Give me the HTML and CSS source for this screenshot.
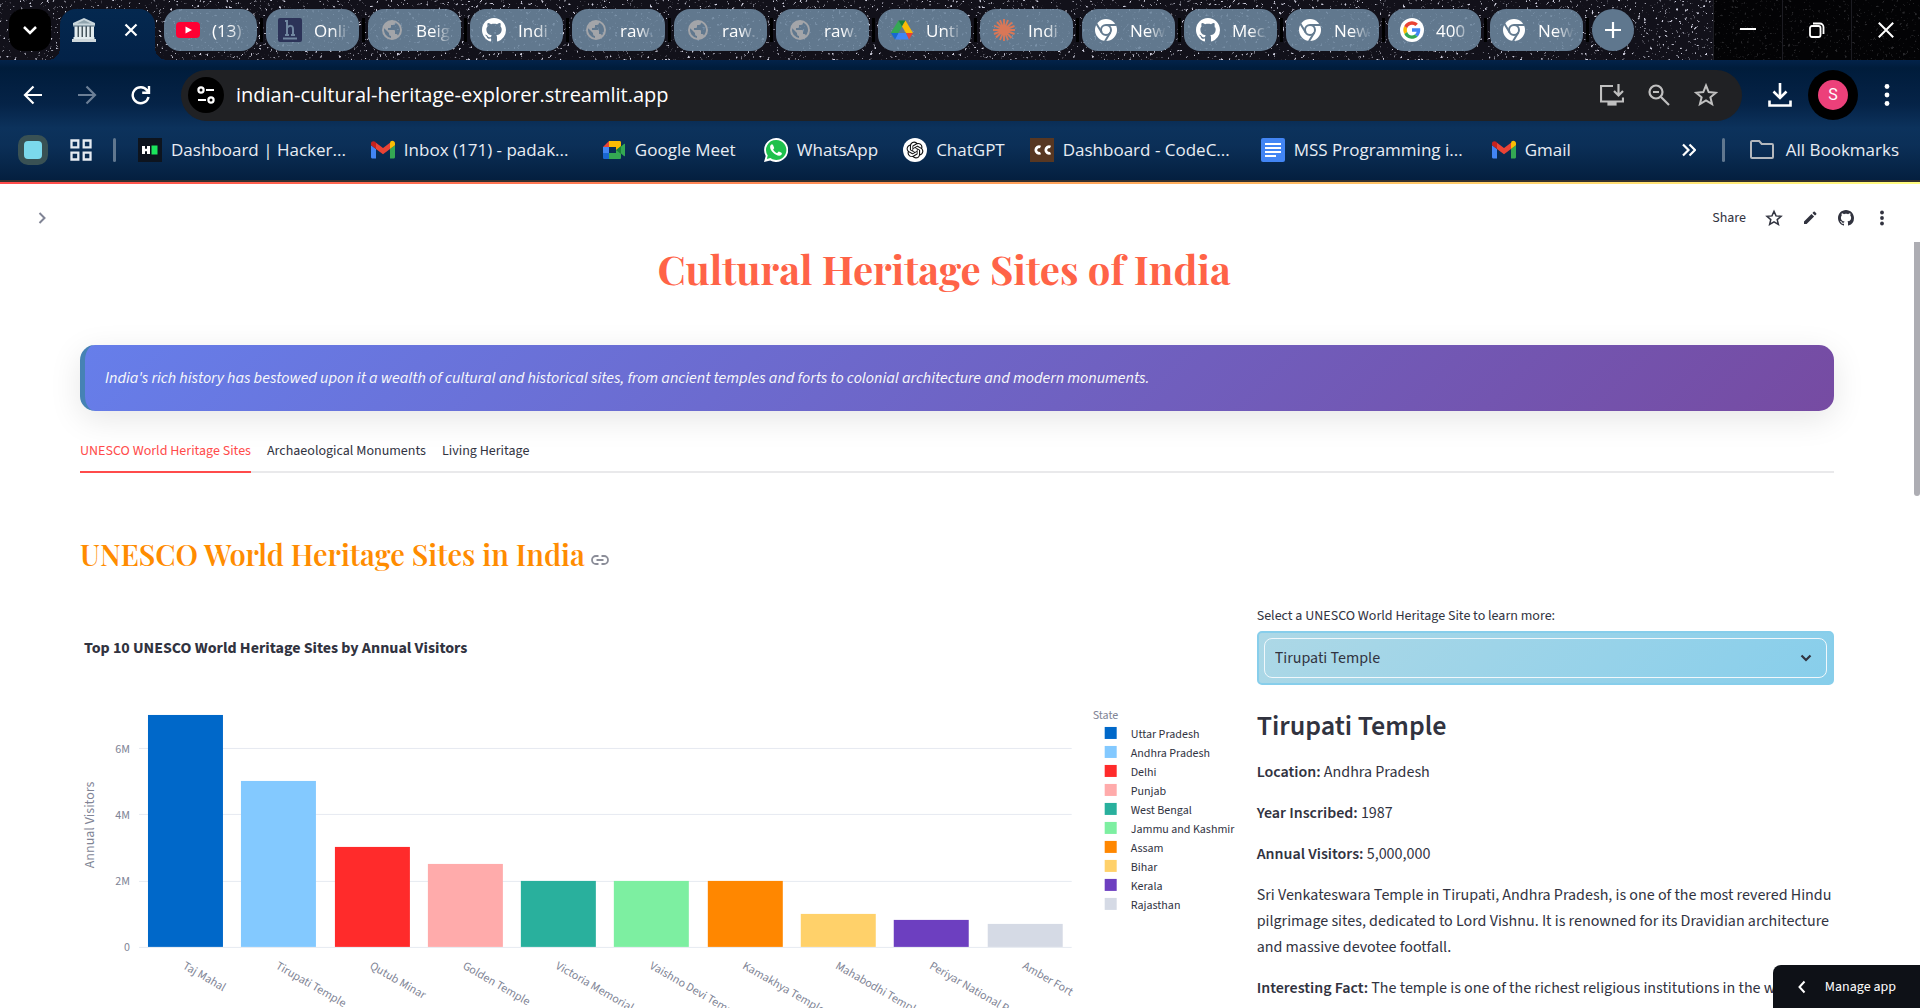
FILE: index.html
```html
<!DOCTYPE html>
<html lang="en">
<head>
<meta charset="utf-8">
<meta name="viewport" content="width=device-width, initial-scale=1">
<title>Cultural Heritage Sites of India</title>
<link rel="stylesheet" href="styles.css">
</head>
<body>
<svg class="sprite" aria-hidden="true">
  <symbol id="globe" viewBox="0 0 24 24"><path fill="#a3a5a9" d="M12 2a10 10 0 1 0 0 20 10 10 0 0 0 0-20zm-1 17.900A8 8 0 0 1 4.200 10.200L9 15v1a2 2 0 0 0 2 2zm6.900-2.500A2 2 0 0 0 16 16h-1v-3a1 1 0 0 0-1-1H8v-2h2a1 1 0 0 0 1-1V7h2a2 2 0 0 0 2-2v-.400a8 8 0 0 1 2.900 12.800z"/></symbol>
  <symbol id="github" viewBox="0 0 16 16"><path fill="currentColor" d="M8 0C3.580 0 0 3.580 0 8c0 3.540 2.290 6.530 5.470 7.590.4.070.55-.17.55-.38 0-.19-.01-.82-.01-1.490-2.010.37-2.530-.49-2.690-.94-.09-.23-.48-.94-.82-1.130-.28-.15-.68-.52-.01-.53.63-.01 1.080.58 1.230.82.72 1.210 1.870.87 2.330.66.07-.52.28-.87.51-1.070-1.780-.2-3.640-.89-3.640-3.950 0-.87.31-1.590.82-2.150-.08-.2-.36-1.020.08-2.120 0 0 .67-.21 2.200.82.64-.18 1.320-.27 2-.27s1.360.09 2 .27c1.530-1.040 2.200-.82 2.200-.82.44 1.100.16 1.920.08 2.120.51.56.82 1.270.82 2.150 0 3.070-1.870 3.750-3.650 3.950.29.25.54.73.54 1.480 0 1.070-.01 1.930-.01 2.200 0 .21.15.46.55.38A8.010 8.010 0 0 0 16 8c0-4.420-3.580-8-8-8z"/></symbol>
  <symbol id="chrome" viewBox="0 0 24 24"><circle cx="12" cy="12" r="11" fill="#fff"/><g fill="none" stroke="#647b90" stroke-width="2"><circle cx="12" cy="12" r="5"/><path d="M12 7h10.500M7.700 14.500 2.400 5.800M16.300 14.500 11 23.300"/></g></symbol>
  <symbol id="gmail" viewBox="0 0 24 24"><path fill="#4285f4" d="M1 20.500h4V11L0 7.200v11.600c0 1 .5 1.700 1 1.700z"/><path fill="#34a853" d="M19 20.500h4c.6 0 1-.7 1-1.700V7.200L19 11z"/><path fill="#fbbc04" d="M19 4.800V11l5-3.800V5.500c0-2.300-2.500-3.500-4.300-2.200z"/><path fill="#ea4335" d="M5 11V4.700l7 5.300 7-5.300V11l-7 5.300z"/><path fill="#c5221f" d="M0 5.500v1.700L5 11V4.700l-.7-.9C2.500 2.500 0 3.200 0 5.500z"/></symbol>
</svg>

<header class="browser">
  <div class="tabstrip">
    <svg class="stars" aria-hidden="true"><filter id="sky" x="0" y="0" width="100%" height="100%"><feTurbulence type="fractalNoise" baseFrequency=".34" numOctaves="2" seed="7"/><feColorMatrix values="0 0 0 0 .62  0 0 0 0 .62  0 0 0 0 .72  8 0 0 0 -5.200"/></filter><rect width="100%" height="100%" filter="url(#sky)"/></svg>
    <button class="tabsearch" aria-label="Search tabs"><svg width="16" height="16" viewBox="0 0 16 16" fill="none" stroke="#fff" stroke-width="2.500"><path d="m2 5 6 6 6-6"/></svg></button>
    <div class="tab active">
      <svg width="24" height="24" viewBox="0 0 24 24"><path fill="#c9d6dc" d="M12 0 23 5v3H1V5z"/><path fill="#90a4ae" d="m12 2 7 3.500H5zM1 7h22v1.500H1z"/><path fill="#46555c" d="M3 8.500h18V19H3z"/><path fill="#e3ecef" d="M2.500 8.500h3V19h-3zm4.500 0h2.500V19H7zm4 0h2.500V19H11zm4 0h2.500V19H15zm4 0h3V19h-3zM1.500 19h21v2h-21z"/><path fill="#cfd8dc" d="M0 21h24v3H0z"/></svg>
      <button class="tabclose" aria-label="Close tab"><svg width="14" height="14" viewBox="0 0 14 14" stroke="#fff" stroke-width="2.200"><path d="m1.500 1.500 11 11m0-11-11 11"/></svg></button>
    </div>
    <div class="tab"><svg viewBox="0 0 24 24"><rect y="4" width="24" height="16" rx="4" fill="#f03"/><path fill="#fff" d="M9.500 8.500 16 12l-6.500 3.500z"/></svg><span>(13)</span></div><i></i>
    <div class="tab"><svg viewBox="0 0 24 24"><rect width="24" height="24" rx="2" fill="#2c3358"/><path fill="none" stroke="#7187a0" stroke-width="2" d="M7 3h2v14M7 17h4m-2-7c2-3 6-3 6 1v6m-2 0h4M5 20.500h14"/></svg><span>Onli</span></div><i></i>
    <div class="tab"><svg><use href="#globe"/></svg><span>Beig</span></div><i></i>
    <div class="tab"><svg><use href="#github"/></svg><span>Indi</span></div><i></i>
    <div class="tab"><svg><use href="#globe"/></svg><span>raw.</span></div><i></i>
    <div class="tab"><svg><use href="#globe"/></svg><span>raw.</span></div><i></i>
    <div class="tab"><svg><use href="#globe"/></svg><span>raw.</span></div><i></i>
    <div class="tab"><svg viewBox="0 0 24 24"><path fill="#34a853" d="M8.500 2.500 12 8.500 5 21 1 14.500z"/><path fill="#188038" d="M8.500 2.500h7L12 8.500z"/><path fill="#fbbc04" d="M15.500 2.500 23 15h-7L12 8.500z"/><path fill="#4285f4" d="M8 15h8l3 6.500H5z"/><path fill="#1967d2" d="M1 15h7.500L5 21.500z"/><path fill="#ea4335" d="M16 15h7l-4 6.500z"/></svg><span>Unti</span></div><i></i>
    <div class="tab"><svg viewBox="0 0 24 24" stroke="#d97757" stroke-width="1.900"><path d="M12 12V1m0 11 4-10m-4 10 8-7.500M12 12l10.500-4M12 12h11M12 12l10.500 4M12 12l7.500 8M12 12l4 10m-4-10v11m0-11-4 10m4-10-8 7.500M12 12 2 16m10-4H1m11 0L2 7.500M12 12 5 4m7 8L8 2"/></svg><span>Indi</span></div><i></i>
    <div class="tab"><svg><use href="#chrome"/></svg><span>New</span></div><i></i>
    <div class="tab"><svg><use href="#github"/></svg><span>Mec</span></div><i></i>
    <div class="tab"><svg><use href="#chrome"/></svg><span>New</span></div><i></i>
    <div class="tab"><svg viewBox="0 0 24 24"><circle cx="12" cy="12" r="12" fill="#fff"/><path fill="#4285f4" d="M20.200 10.300H12v3.500h4.700c-.3 1.200-1 2.100-1.900 2.700l2.800 2.200c2-1.900 3-4.900 2.600-8.400z"/><path fill="#34a853" d="M4.300 15.900A8.600 8.600 0 0 0 17.600 18.700l-2.800-2.200c-3 2-6.800.6-7.700-2.800z"/><path fill="#fbbc05" d="M4.300 8.100a8.500 8.500 0 0 0 0 7.800l2.800-2.200a5.400 5.400 0 0 1 0-3.400z"/><path fill="#ea4335" d="M4.300 8.100A8.600 8.600 0 0 1 17.900 5.700l-2.500 2.400C12.500 5.600 8.300 6.900 7.100 10.300z"/></svg><span>400</span></div><i></i>
    <div class="tab"><svg><use href="#chrome"/></svg><span>New</span></div><i></i>
    <button class="newtab" aria-label="New tab"><svg width="16" height="16" viewBox="0 0 16 16" stroke="#fff" stroke-width="2.200"><path d="M8 0v16M0 8h16"/></svg></button>
    <div class="winctl">
      <button aria-label="Minimize"><svg width="16" height="16" viewBox="0 0 16 16" stroke="#fff" stroke-width="2"><path d="M0 7h16"/></svg></button>
      <button aria-label="Restore"><svg width="16" height="16" viewBox="0 0 16 16" fill="none" stroke="#fff" stroke-width="1.800"><rect x="1" y="4" width="10.500" height="11" rx="2"/><path d="M4 1.500h7a3.500 3.500 0 0 1 3.500 3.500v7"/></svg></button>
      <button aria-label="Close"><svg width="16" height="16" viewBox="0 0 16 16" stroke="#fff" stroke-width="2"><path d="m.8.8 14.400 14.400m0-14.400L.8 15.200"/></svg></button>
    </div>
  </div>

  <div class="toolbar">
    <button aria-label="Back"><svg width="20" height="20" viewBox="0 0 20 20" fill="none" stroke="#fff" stroke-width="2.200"><path d="M19 10H2m8.500-8.500L2 10l8.500 8.500"/></svg></button>
    <button aria-label="Forward"><svg width="20" height="20" viewBox="0 0 20 20" fill="none" stroke="#6c7f96" stroke-width="2.200"><path d="M1 10h17M9.500 1.500 18 10l-8.500 8.500"/></svg></button>
    <button aria-label="Reload"><svg width="20" height="20" viewBox="0 0 20 20" fill="none" stroke="#fff" stroke-width="2.400"><path d="M17.500 12a8 8 0 1 1-1.300-6.500L18 7.500M18 1v6.800h-6.800"/></svg></button>
    <div class="omnibox">
      <button class="siteinfo" aria-label="View site information"><svg width="20" height="20" viewBox="0 0 20 20" fill="none" stroke="#fff" stroke-width="2.200"><circle cx="5" cy="5" r="2.600"/><path d="M10 5h8M2 15h8"/><circle cx="15" cy="15" r="2.600"/></svg></button>
      <input type="text" aria-label="Address" value="indian-cultural-heritage-explorer.streamlit.app">
      <button aria-label="Install app"><svg width="24" height="24" viewBox="0 0 24 24" fill="none" stroke="#c0c0c0" stroke-width="2.200"><path d="M13 3H1v15.500h22v-4M18.500 1v11m-4.500-4 4.500 4.500L23 8"/><path fill="#c0c0c0" d="M8.500 20h7v1.500h-7z"/></svg></button>
      <button aria-label="Zoom"><svg width="22" height="22" viewBox="0 0 22 22" fill="none" stroke="#c0c0c0" stroke-width="2.200"><circle cx="8" cy="8" r="6.500"/><path d="m13 13 8 8M5 8h6"/></svg></button>
      <button aria-label="Bookmark this tab"><svg width="24" height="24" viewBox="0 0 24 24" fill="none" stroke="#c0c0c0" stroke-width="2"><path d="m12 2.500 2.700 6.600 7.100.6-5.400 4.600 1.700 6.900L12 17.500l-6.100 3.700 1.700-6.900-5.400-4.600 7.100-.6z"/></svg></button>
    </div>
    <button class="download" aria-label="Downloads"><svg width="24" height="24" viewBox="0 0 24 24" fill="none" stroke="#fff" stroke-width="2.600"><path d="M12 0v15m-6.500-6.500L12 15l6.500-6.500M1.500 17.500v5h21v-5"/></svg></button>
    <button class="avatar" aria-label="Profile"><span>S</span></button>
    <button class="more" aria-label="Menu"><svg width="6" height="24" viewBox="0 0 6 24" fill="#fff"><circle cx="3" cy="3.500" r="2.400"/><circle cx="3" cy="12" r="2.400"/><circle cx="3" cy="20.500" r="2.400"/></svg></button>
  </div>

  <nav class="bookmarks">
    <span class="chip"></span>
    <svg class="apps" width="22" height="22" viewBox="0 0 22 22" fill="none" stroke="#e6ebf2" stroke-width="2.300"><path d="M1.500 1.500h6.800v6.800H1.500zM13.700 1.500h6.800v6.800h-6.800zM1.500 13.700h6.800v6.800H1.500zM13.700 13.700h6.800v6.800h-6.800z"/></svg>
    <i></i>
    <a class="long first" href="#"><svg viewBox="0 0 24 24"><path fill="#0d141e" d="M0 0h24v24H0z"/><path fill="#fff" d="M4 8h3v2.800h2V8h3v8H9v-2.800H7V16H4z"/><path fill="#1be45c" d="M13.500 7.500h6v9h-6z"/></svg>Dashboard | Hacker...</a>
    <a class="long" href="#"><svg><use href="#gmail"/></svg>Inbox (171) - padak...</a>
    <a class="medium" href="#"><svg viewBox="0 0 24 24"><path fill="#ea4335" d="M7 3v6H1z"/><path fill="#fbbc04" d="M7 3h10.500c1 0 1.500.5 1.500 1.500V12l-5 2V9H7z"/><path fill="#4285f4" d="M1 9h6v6H1z"/><path fill="#1967d2" d="M1 15h6v6H2.500C1.500 21 1 20.500 1 19.500z"/><path fill="#34a853" d="M7 15h7v-3h5v7.500c0 1-.5 1.500-1.500 1.500H7z"/><path fill="#188038" d="m14 12 5-4v8z"/><path fill="#34a853" d="M19 8.500 22 6c.6-.5 1-.2 1 .4v11.200c0 .6-.4.9-1 .4l-3-2.500z"/></svg>Google Meet</a>
    <a href="#"><svg viewBox="0 0 24 24"><path fill="#fff" d="M12 0a12 12 0 0 0-10.300 18L0 24l6.200-1.600A12 12 0 1 0 12 0z"/><path fill="#1fc14c" d="M12 2a10 10 0 0 0-8.300 15.500L2.800 21l3.600-1A10 10 0 1 0 12 2z"/><path fill="#fff" d="M8 6.200c-.6 0-1.900 1-1.900 2.800 0 3.700 5.500 8.700 9 8.700 1.800 0 2.800-1.300 2.800-2.300 0-.7-2.600-1.900-3.100-1.900s-1.200 1.600-1.600 1.600c-1 0-4-2.700-4-3.600 0-.4 1-1 1-1.500S9 6.200 8 6.200z"/></svg>WhatsApp</a>
    <a href="#"><svg viewBox="0 0 24 24"><circle cx="12" cy="12" r="12" fill="#fff"/><path transform="translate(3.600 3.600) scale(.7)" fill="#111" d="M22.282 9.821a5.985 5.985 0 0 0-.516-4.911 6.046 6.046 0 0 0-6.510-2.900A6.065 6.065 0 0 0 4.981 4.182a5.985 5.985 0 0 0-3.998 2.900 6.046 6.046 0 0 0 .743 7.097 5.980 5.980 0 0 0 .511 4.911 6.051 6.051 0 0 0 6.515 2.900A5.985 5.985 0 0 0 13.260 24a6.056 6.056 0 0 0 5.772-4.206 5.989 5.989 0 0 0 3.998-2.900 6.056 6.056 0 0 0-.748-7.073zm-9.022 12.608a4.476 4.476 0 0 1-2.876-1.041l.142-.080 4.778-2.758a.795.795 0 0 0 .393-.681v-6.737l2.020 1.169a.071.071 0 0 1 .038.052v5.583a4.504 4.504 0 0 1-4.495 4.494zm-9.661-4.125a4.471 4.471 0 0 1-.535-3.014l.142.085 4.783 2.758a.771.771 0 0 0 .781 0l5.843-3.369v2.332a.080.080 0 0 1-.033.062L9.740 19.950a4.499 4.499 0 0 1-6.141-1.646zM2.341 7.896a4.485 4.485 0 0 1 2.366-1.973V11.600a.766.766 0 0 0 .388.677l5.814 3.354-2.020 1.169a.076.076 0 0 1-.071 0l-4.830-2.787A4.504 4.504 0 0 1 2.341 7.872zm16.596 3.856L13.104 8.364 15.119 7.200a.076.076 0 0 1 .071 0l4.830 2.791a4.494 4.494 0 0 1-.677 8.104v-5.677a.790.790 0 0 0-.407-.667zm2.011-3.023l-.142-.085-4.774-2.782a.776.776 0 0 0-.785 0L9.409 9.230V6.897a.066.066 0 0 1 .028-.062l4.830-2.787a4.499 4.499 0 0 1 6.680 4.660zM8.307 12.863l-2.020-1.164a.080.080 0 0 1-.038-.057V6.074a4.499 4.499 0 0 1 7.376-3.454l-.142.081L8.704 5.459a.795.795 0 0 0-.393.681zm1.098-2.365l2.602-1.500 2.607 1.500v2.999l-2.597 1.500-2.607-1.500Z"/></svg>ChatGPT</a>
    <a class="long" href="#"><svg viewBox="0 0 24 24"><path fill="#573722" d="M0 0h24v24H0z"/><path fill="none" stroke="#fff" stroke-width="2.800" d="M10.500 9a3.300 3.300 0 1 0 0 6M20.500 9a3.300 3.300 0 1 0 0 6"/></svg>Dashboard - CodeC...</a>
    <a class="long" href="#"><svg viewBox="0 0 24 24"><rect width="24" height="24" rx="2" fill="#4285f4"/><path stroke="#fff" stroke-width="2.200" d="M4 6h16M4 10h16M4 14h16M4 18h11"/></svg>MSS Programming i...</a>
    <a href="#"><svg><use href="#gmail"/></svg>Gmail</a>
    <button class="overflow" aria-label="More bookmarks"><svg width="14" height="14" viewBox="0 0 14 14" fill="none" stroke="#fff" stroke-width="2.200"><path d="m1 1.500 5.500 5.500L1 12.500M7.500 1.500 13 7l-5.500 5.500"/></svg></button>
    <i></i>
    <a class="all" href="#"><svg viewBox="0 0 24 24" fill="none" stroke="#b4b8bd" stroke-width="2"><path d="M1 4.500c0-.8.4-1.500 1.200-1.500h7l2.500 3H22c.7 0 1 .4 1 1.200V19c0 .7-.4 1-1 1H2c-.7 0-1-.4-1-1z"/></svg>All Bookmarks</a>
  </nav>
</header>

<div class="app">
  <div class="appbar">
    <button aria-label="Open sidebar"><svg width="20" height="20" viewBox="0 0 20 20" fill="none" stroke="#808495" stroke-width="2"><path d="m7.500 5 5 5-5 5"/></svg></button>
    <div class="actions">
      <button>Share</button>
      <button aria-label="Favorite"><svg width="18" height="18" viewBox="0 0 18 18" fill="none" stroke="#31333f" stroke-width="1.500"><path d="m9 2.300 2 4.600 5 .4-3.800 3.300 1.200 4.900L9 12.900l-4.400 2.600 1.200-4.900L2 7.300l5-.4z"/></svg></button>
      <button aria-label="Edit"><svg width="18" height="18" viewBox="0 0 18 18" fill="#31333f"><path d="M3 12.400V15h2.600l7.500-7.500-2.600-2.600zM11.400 4l2.600 2.600 1.200-1.200a.9.9 0 0 0 0-1.200l-1.400-1.400a.9.9 0 0 0-1.200 0z"/></svg></button>
      <button aria-label="View source"><svg width="16" height="16"><use href="#github"/></svg></button>
      <button aria-label="Main menu"><svg width="18" height="18" viewBox="0 0 18 18" fill="#31333f"><circle cx="9" cy="3.500" r="1.900"/><circle cx="9" cy="9" r="1.900"/><circle cx="9" cy="14.500" r="1.900"/></svg></button>
    </div>
  </div>

  <main>
    <h1>Cultural Heritage Sites of India</h1>
    <p class="banner">India's rich history has bestowed upon it a wealth of cultural and historical sites, from ancient temples and forts to colonial architecture and modern monuments.</p>
    <div class="tabs" role="tablist">
      <button role="tab" aria-selected="true">UNESCO World Heritage Sites</button>
      <button role="tab" aria-selected="false">Archaeological Monuments</button>
      <button role="tab" aria-selected="false">Living Heritage</button>
    </div>
    <h2>UNESCO World Heritage Sites in India <a href="#" aria-label="Link to heading"><svg width="18" height="10" viewBox="0 0 18 10" fill="none" stroke="#8b8d98" stroke-width="1.800"><path d="M7.500 1H5a4 4 0 0 0 0 8h2.500M10.500 1H13a4 4 0 0 1 0 8h-2.500M5.500 5h7"/></svg></a></h2>

    <div class="columns">
      <svg class="chart" viewBox="0 0 1155 420" role="img" aria-label="Top 10 UNESCO World Heritage Sites by Annual Visitors">
        <text class="ctitle" x="4" y="58">Top 10 UNESCO World Heritage Sites by Annual Visitors</text>
        <path class="grid" d="M59 153.500h933M59 219.500h933M59 286.500h933M59 352.500h933"/>
        <g class="tick" text-anchor="end"><text x="50" y="158">6M</text><text x="50" y="224">4M</text><text x="50" y="290">2M</text><text x="50" y="356">0</text></g>
        <text class="axis" text-anchor="middle" transform="translate(14 230) rotate(-90)">Annual Visitors</text>
        <g>
          <rect x="68" y="120" width="75" height="232" fill="#0068c9"/>
          <rect x="161" y="186" width="75" height="166" fill="#83c9ff"/>
          <rect x="255" y="252" width="75" height="100" fill="#ff2b2b"/>
          <rect x="348" y="269" width="75" height="83" fill="#ffabab"/>
          <rect x="441" y="286" width="75" height="66" fill="#29b09d"/>
          <rect x="534" y="286" width="75" height="66" fill="#7defa1"/>
          <rect x="628" y="286" width="75" height="66" fill="#ff8700"/>
          <rect x="721" y="319" width="75" height="33" fill="#ffd16a"/>
          <rect x="814" y="325" width="75" height="27" fill="#6d3fc0"/>
          <rect x="908" y="329" width="75" height="23" fill="#d5dae5"/>
        </g>
        <g class="tick">
          <text transform="translate(102 373) rotate(30)">Taj Mahal</text>
          <text transform="translate(195 373) rotate(30)">Tirupati Temple</text>
          <text transform="translate(289 373) rotate(30)">Qutub Minar</text>
          <text transform="translate(382 373) rotate(30)">Golden Temple</text>
          <text transform="translate(475 373) rotate(30)">Victoria Memorial</text>
          <text transform="translate(569 373) rotate(30)">Vaishno Devi Temple</text>
          <text transform="translate(662 373) rotate(30)">Kamakhya Temple</text>
          <text transform="translate(755 373) rotate(30)">Mahabodhi Temple</text>
          <text transform="translate(849 373) rotate(30)">Periyar National Park</text>
          <text transform="translate(942 373) rotate(30)">Amber Fort</text>
        </g>
        <text class="tick" x="1013" y="124">State</text>
        <g>
          <rect x="1025" y="132" width="12" height="12" fill="#0068c9"/><rect x="1025" y="151" width="12" height="12" fill="#83c9ff"/><rect x="1025" y="170" width="12" height="12" fill="#ff2b2b"/><rect x="1025" y="189" width="12" height="12" fill="#ffabab"/><rect x="1025" y="208" width="12" height="12" fill="#29b09d"/><rect x="1025" y="227" width="12" height="12" fill="#7defa1"/><rect x="1025" y="246" width="12" height="12" fill="#ff8700"/><rect x="1025" y="265" width="12" height="12" fill="#ffd16a"/><rect x="1025" y="284" width="12" height="12" fill="#6d3fc0"/><rect x="1025" y="303" width="12" height="12" fill="#d5dae5"/>
        </g>
        <g class="legend">
          <text x="1051" y="143">Uttar Pradesh</text><text x="1051" y="162">Andhra Pradesh</text><text x="1051" y="181">Delhi</text><text x="1051" y="200">Punjab</text><text x="1051" y="219">West Bengal</text><text x="1051" y="238">Jammu and Kashmir</text><text x="1051" y="257">Assam</text><text x="1051" y="276">Bihar</text><text x="1051" y="295">Kerala</text><text x="1051" y="314">Rajasthan</text>
        </g>
      </svg>

      <section class="detail">
        <label for="site">Select a UNESCO World Heritage Site to learn more:</label>
        <div class="selectbox">
          <select id="site"><option>Tirupati Temple</option></select>
          <svg width="12" height="8" viewBox="0 0 12 8" fill="none" stroke="#31333f" stroke-width="2.200"><path d="m1.500 1.500 4.500 4.500 4.500-4.500"/></svg>
        </div>
        <h3>Tirupati Temple</h3>
        <p><strong>Location:</strong> Andhra Pradesh</p>
        <p><strong>Year Inscribed:</strong> 1987</p>
        <p><strong>Annual Visitors:</strong> 5,000,000</p>
        <p>Sri Venkateswara Temple in Tirupati, Andhra Pradesh, is one of the most revered Hindu pilgrimage sites, dedicated to Lord Vishnu. It is renowned for its Dravidian architecture and massive devotee footfall.</p>
        <p><strong>Interesting Fact:</strong> The temple is one of the richest religious institutions in the world.</p>
      </section>
    </div>
  </main>
  <div class="scrollthumb"></div>
  <button class="manage"><svg width="8" height="14" viewBox="0 0 8 14" fill="none" stroke="#fff" stroke-width="2"><path d="M6.500 1.500 1.500 7l5 5.500"/></svg>Manage app</button>
</div>
</body>
</html>
```
FILE: styles.css
```css
* { box-sizing: border-box; }
body {
  margin: 0;
  height: 100vh;
  display: flex;
  flex-direction: column;
  overflow: hidden;
  background: #fff;
  color: #31333f;
  font-family: "Source Sans 3", "Noto Sans CJK JP", sans-serif;
  font-size: 16px;
}
button {
  display: flex;
  align-items: center;
  justify-content: center;
  padding: 0;
  border: 0;
  background: none;
  color: inherit;
  font: inherit;
}
svg { flex: none; }
.sprite { position: absolute; width: 0; height: 0; }

/* Browser frame */
.browser {
  flex: none;
  color: #fff;
  font-family: "Open Sans", sans-serif;
  font-size: 17px;
  background: linear-gradient(#03234a 60px, #001c3b 68px, #052347 104px, #0c325c 128px, #0b2f57 146px, #041f3f 180px);
  border-bottom: 2px solid #33302f;
}
.tabstrip {
  position: relative;
  display: flex;
  align-items: center;
  height: 60px;
  padding-left: 9px;
  background: #12111a;
}
.tabstrip > * { position: relative; flex: none; }
.tabstrip .stars { position: absolute; top: 0; left: 0; width: 100%; height: 60px; }
.tabsearch { width: 42px; height: 42px; border-radius: 14px; background: #000; }
.tab {
  display: flex;
  align-items: center;
  gap: 12px;
  width: 93px;
  height: 42px;
  padding-left: 12px;
  border-radius: 16px;
  background: rgba(109, 135, 160, .87);
}
.tab svg { width: 24px; height: 24px; }
.tab span {
  width: 40px;
  white-space: nowrap;
  -webkit-mask-image: linear-gradient(90deg, #000 45%, transparent 90%);
  mask-image: linear-gradient(90deg, #000 45%, transparent 90%);
}
.tab.active {
  align-self: flex-end;
  gap: 28px;
  width: 95px;
  height: 51px;
  margin: 0 9px;
  padding-bottom: 9px;
  border-radius: 16px 16px 0 0;
  background: linear-gradient(#04284f, #032248);
}
.tab.active::before,
.tab.active::after {
  content: "";
  position: absolute;
  bottom: 0;
  width: 12px;
  height: 12px;
}
.tab.active::before { left: -12px; background: radial-gradient(circle at 0 0, transparent 12px, #032248 12px); }
.tab.active::after { right: -12px; background: radial-gradient(circle at 100% 0, transparent 12px, #032248 12px); }
.tab.active .tabclose svg { width: 14px; height: 14px; }
.tabstrip > i { width: 3px; height: 24px; margin: 0 3px; background: #000; }
.newtab { width: 42px; height: 42px; border-radius: 50%; background: #5f778e; }
.winctl { display: flex; align-self: stretch; margin-left: auto; background: rgba(0, 0, 0, .8); }
.winctl button { width: 69px; border-left: 1px solid #1c1c22; }

.toolbar { display: flex; align-items: center; height: 70px; padding-right: 30px; }
.toolbar > button { width: 54px; }
.toolbar > button:first-child { margin-left: 6px; }
.omnibox {
  display: flex;
  flex: 1;
  align-items: center;
  height: 51px;
  margin-left: 13px;
  padding: 0 24px 0 7px;
  gap: 24px;
  border-radius: 26px;
  background: #202124;
}
.omnibox .siteinfo { width: 36px; height: 36px; border-radius: 50%; background: #000; }
.omnibox input {
  flex: 1;
  margin-left: -12px;
  padding: 0 0 2px;
  border: 0;
  outline: 0;
  background: none;
  color: #fff;
  font: 20px "Open Sans", sans-serif;
}
.toolbar > .download { width: 76px; }
.toolbar > .avatar { width: 50px; height: 50px; margin-left: -10px; border-radius: 50%; background: #000; }
.avatar span { width: 30px; border-radius: 50%; background: #ec407a; font: 16px/30px Roboto, sans-serif; }
.toolbar > .more { width: 6px; margin-left: 26px; }

.bookmarks {
  display: flex;
  align-items: center;
  height: 50px;
  padding: 0 21px 11px 18px;
}
.chip { width: 30px; height: 30px; border: 6px solid #395154; border-radius: 10px; background: #7bd8ec; }
.apps { margin: 0 21px 0 22px; }
.bookmarks i { width: 3px; height: 24px; border-radius: 2px; background: #60778f; }
.bookmarks a {
  display: flex;
  align-items: center;
  gap: 9px;
  margin-left: 25px;
  color: #e8edf4;
  text-decoration: none;
  white-space: nowrap;
}
.bookmarks a svg { width: 24px; height: 24px; }
.bookmarks .long { min-width: 206px; }
.bookmarks .medium { min-width: 137px; }
.bookmarks .first { margin-left: 22px; }
.bookmarks .all { gap: 12px; }
.overflow { width: 14px; margin: 0 26px 0 auto; }

/* App page */
.app {
  position: relative;
  flex: 1;
  min-height: 0;
  overflow: hidden;
}
.app::before {
  content: "";
  display: block;
  height: 2px;
  background: linear-gradient(90deg, #ff4b4b, #ffac5c 60%, #fffd80);
}
.appbar {
  display: flex;
  align-items: center;
  justify-content: space-between;
  height: 56px;
  padding: 12px 29px 0 32px;
  font-size: 14px;
}
.actions { display: flex; align-items: center; gap: 18px; }
.actions button { min-width: 18px; }
.actions button:first-child { margin-right: 1px; }
main { padding: 0 86px 0 80px; }
h1, h2, h3, p { margin: 0; }
h1 {
  padding: 2px 26px 49px 0;
  color: #ff6347;
  font: bold 40px/54px "Playfair Display", "Liberation Serif", serif;
  text-align: center;
}
.banner {
  padding: 20px;
  border-left: 5px solid #4682b4;
  border-radius: 15px;
  background: linear-gradient(135deg, #667eea, #764ba2);
  box-shadow: 0 8px 32px rgba(0, 0, 0, .1);
  color: #f8f9fa;
  font-size: 16px;
  font-style: italic;
  line-height: 26px;
}
.tabs {
  display: flex;
  gap: 16px;
  margin-top: 21px;
  border-bottom: 2px solid #e9e9eb;
  font-size: 14px;
}
.tabs button { height: 41px; margin-bottom: -2px; padding-bottom: 2px; border-bottom: 2px solid transparent; }
.tabs [aria-selected="true"] { border-color: #ff4b4b; color: #ff4b4b; }
h2 {
  display: flex;
  align-items: center;
  gap: 6px;
  margin: 61px 0 21px;
  color: #ff8c00;
  font: 600 29px/40px "Playfair Display", "Liberation Serif", serif;
}
h2 a { line-height: 10px; padding-top: 4px; }
.columns { display: grid; grid-template-columns: 2fr 1fr; gap: 22px; align-items: start; }
.chart { display: block; width: 100%; }
.ctitle { font-size: 16px; font-weight: 700; fill: #31333f; }
.tick { font-size: 12px; fill: #808495; }
.axis { font-size: 14px; fill: #808495; }
.legend { font-size: 12px; fill: #31333f; }
.grid { stroke: #e6eaf1; fill: none; }

.detail { padding-top: 8px; line-height: 26px; }
.detail label { display: block; margin-bottom: 2px; font-size: 14px; }
.selectbox {
  display: flex;
  position: relative;
  align-items: center;
  height: 54px;
  padding: 5px;
  border: 2px solid #87ceeb;
  border-radius: 5px;
  background: linear-gradient(135deg, #add8e6, #87ceeb);
}
.selectbox select {
  flex: 1;
  height: 40px;
  padding: 0 11px 0 10px;
  appearance: none;
  border: 1px solid #f0f7fb;
  border-radius: 8px;
  background: none;
  color: #31333f;
  font: inherit;
}
.selectbox svg { position: absolute; right: 20px; pointer-events: none; }
h3 { margin: 23px 0 15px; font-size: 28px; font-weight: 600; line-height: 36px; }
.detail p { margin-bottom: 15px; }
.detail strong { font-weight: 600; }

.scrollthumb {
  position: absolute;
  top: 60px;
  right: 0;
  width: 6px;
  height: 254px;
  border-radius: 0 0 3px 3px;
  background: #adadb3;
}
.manage {
  position: absolute;
  right: 0;
  bottom: 0;
  gap: 19px;
  height: 43px;
  padding: 0 24px 0 25px;
  border-radius: 8px 0 0 0;
  background: #0e1117;
  color: #fff;
  font-size: 14px;
}
```
